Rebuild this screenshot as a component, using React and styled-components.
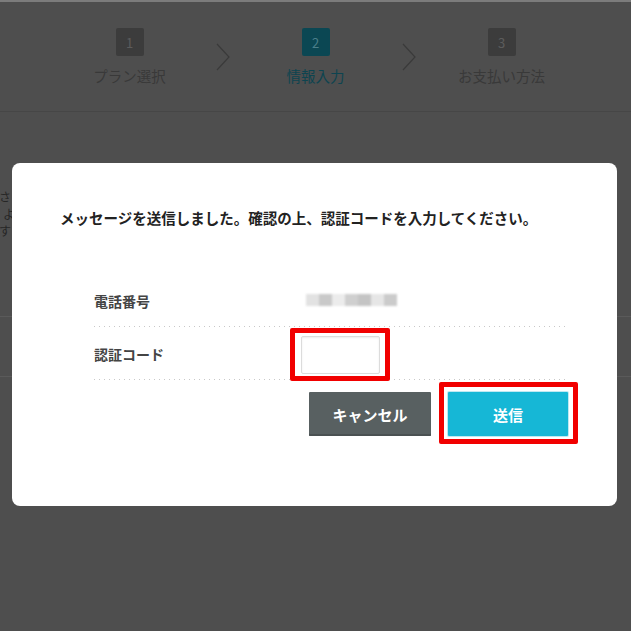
import styled, { createGlobalStyle } from "styled-components";

const GlobalStyle = createGlobalStyle`
  html, body {
    margin: 0;
    padding: 0;
    background: #4e4e4e;
  }
  body {
    font-family: "Noto Sans CJK JP", "Noto Sans", sans-serif;
    overflow: hidden;
  }
`;

const steps = [
  { no: 1, label: "プラン選択" },
  { no: 2, label: "情報入力", active: true },
  { no: 3, label: "お支払い方法" },
];

const App = () => {
  return (
    <>
      <GlobalStyle />
      <Page>
        {/* 背後のページ（暗く表示） */}
        <Stepper>
          {steps.map((s, i) => (
            <StepGroup key={s.no}>
              {i > 0 && (
                <Chevron>
                  <svg width="14" height="28" viewBox="0 0 14 28">
                    <polyline points="1,1 13,14 1,27" fill="none" stroke="#3a3a3a" strokeWidth="1.2" />
                  </svg>
                </Chevron>
              )}
              <Step>
                <StepNo $active={s.active}>{s.no}</StepNo>
                <StepLabel $active={s.active}>{s.label}</StepLabel>
              </Step>
            </StepGroup>
          ))}
        </Stepper>

        <BgContent>
          <BgText>
            <BgLine>さ</BgLine>
            <BgLine $indent>よ</BgLine>
            <BgLine>す</BgLine>
          </BgText>
          <BgTable>
            <BgRow />
            <BgRow />
          </BgTable>
        </BgContent>

        {/* モーダル */}
        <Overlay>
          <Modal>
            <Message>メッセージを送信しました。確認の上、認証コードを入力してください。</Message>

            <Table>
              <Row>
                <Label>電話番号</Label>
                <Value>
                  <Blurred>
                    <i style={{ background: "#e2e2e2" }} />
                    <i style={{ background: "#c9c9c9" }} />
                    <i style={{ background: "#ececec" }} />
                    <i style={{ background: "#cfcfcf" }} />
                    <i style={{ background: "#c4c4c4" }} />
                    <i style={{ background: "#e6e6e6" }} />
                    <i style={{ background: "#cbcbcb" }} />
                  </Blurred>
                </Value>
              </Row>
              <Row>
                <Label>認証コード</Label>
                <Value>
                  <InputWrap>
                    <CodeInput type="text" />
                    <Highlight $inset="-8px -10px -7px -11px" />
                  </InputWrap>
                </Value>
              </Row>
            </Table>

            <Buttons>
              <Button $variant="cancel">キャンセル</Button>
              <ButtonWrap>
                <Button $variant="send">送信</Button>
                <Highlight $inset="-10px -10px -8px -9px" />
              </ButtonWrap>
            </Buttons>
          </Modal>
        </Overlay>
      </Page>
    </>
  );
};

export default App;

// ページ全体
const Page = styled.div`
  position: relative;
  width: 631px;
  height: 631px;
  background: #4e4e4e;
  border-top: 2px solid #7c7c7c;
  box-sizing: border-box;
  overflow: hidden;
`;

// ステップ表示
const Stepper = styled.div`
  display: flex;
  justify-content: center;
  padding-top: 26px;
  height: 110px;
  box-sizing: border-box;
  border-bottom: 1px solid #464646;
`;

const StepGroup = styled.div`
  display: flex;
`;

const Chevron = styled.div`
  width: 56px;
  display: flex;
  justify-content: center;
  padding-top: 15px;
  height: 28px;
`;

const Step = styled.div`
  width: 130px;
  display: flex;
  flex-direction: column;
  align-items: center;
`;

const StepNo = styled.div`
  width: 28px;
  height: 28px;
  border-radius: 2px;
  background: ${(p) => (p.$active ? "#0b4753" : "#3c3c3c")};
  color: ${(p) => (p.$active ? "#4b7f8a" : "#5c5c5c")};
  font-size: 13px;
  display: flex;
  align-items: center;
  justify-content: center;
`;

const StepLabel = styled.div`
  margin-top: 11px;
  font-size: 14.5px;
  line-height: 18px;
  color: ${(p) => (p.$active ? "#0d4450" : "#393939")};
  white-space: nowrap;
`;

// 背後のコンテンツ
const BgContent = styled.div`
  padding-top: 78px;
`;

const BgText = styled.div`
  display: flex;
  flex-direction: column;
  gap: 3px;
  margin-left: -1px;
`;

const BgLine = styled.div`
  font-size: 12px;
  line-height: 14px;
  color: #262626;
  padding-left: ${(p) => (p.$indent ? "4px" : "0")};
`;

const BgTable = styled.div`
  margin-top: 78px;
`;

const BgRow = styled.div`
  height: 59px;
  border-top: 1px solid #5a5a5a;
`;

// モーダル背景
const Overlay = styled.div`
  position: absolute;
  inset: 0;
  padding: 161px 14px 0 12px;
`;

const Modal = styled.div`
  background: #fff;
  border-radius: 8px;
  padding: 45px 49px 70px 48px;
`;

const Message = styled.p`
  margin: 0;
  font-size: 14.5px;
  line-height: 20px;
  font-weight: 700;
  color: #222;
  white-space: nowrap;
`;

const Table = styled.div`
  margin: 46px 0 0 34px;
`;

const Row = styled.div`
  display: grid;
  grid-template-columns: 207px 1fr;
  align-items: center;
  height: 53px;
  background-image: linear-gradient(to right, #c8c8c8 1px, transparent 1px);
  background-size: 5px 1px;
  background-repeat: repeat-x;
  background-position: 0 100%;
`;

const Label = styled.div`
  font-size: 14px;
  font-weight: 700;
  color: #444;
`;

const Value = styled.div`
  display: flex;
  align-items: center;
`;

const Blurred = styled.div`
  display: flex;
  margin-left: 5px;
  margin-top: -1px;
  filter: blur(1.2px);

  i {
    display: block;
    width: 13px;
    height: 12px;
  }
`;

const InputWrap = styled.div`
  position: relative;
  margin-top: 2px;
`;

const CodeInput = styled.input`
  display: block;
  width: 79px;
  height: 38px;
  box-sizing: border-box;
  border: 1px solid #dcdcdc;
  border-radius: 2px;
  box-shadow: inset 0 1px 2px rgba(0, 0, 0, 0.08);
  outline: none;
  background: #fff;
`;

// 赤枠の注記
const Highlight = styled.div`
  position: absolute;
  inset: ${(p) => p.$inset};
  border: 5px solid #f10000;
  border-radius: 2px;
  pointer-events: none;
`;

const Buttons = styled.div`
  display: flex;
  justify-content: flex-end;
  gap: 17px;
  margin-top: 12px;
`;

const ButtonWrap = styled.div`
  position: relative;
`;

const Button = styled.button`
  width: ${(p) => (p.$variant === "send" ? "120px" : "122px")};
  height: 44px;
  border: none;
  border-radius: 1px;
  font-family: "Noto Sans CJK JP", sans-serif;
  font-size: 15px;
  font-weight: 700;
  color: #fff;
  background: ${(p) => (p.$variant === "send" ? "#16b7d6" : "#586061")};
  box-shadow: ${(p) =>
    p.$variant === "send" ? "0 0 0 1px #bfe9f2" : "inset 0 -2px 0 #4a5152"};
  cursor: pointer;
`;
